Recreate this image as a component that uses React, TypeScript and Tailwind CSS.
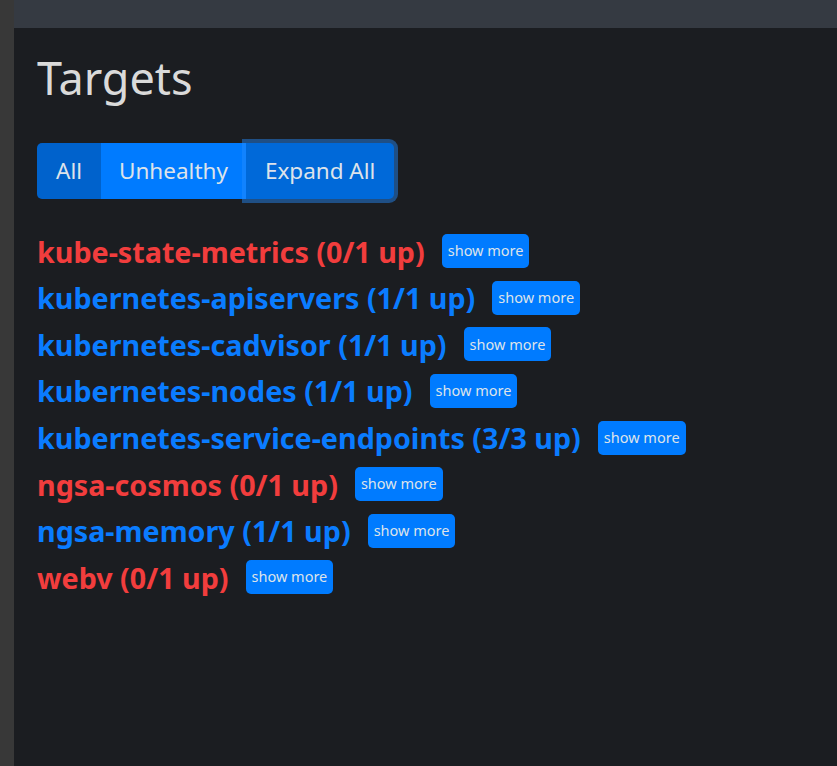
import React from "react";

const targets: { name: string; up: string; healthy: boolean }[] = [
  { name: "kube-state-metrics", up: "0/1 up", healthy: false },
  { name: "kubernetes-apiservers", up: "1/1 up", healthy: true },
  { name: "kubernetes-cadvisor", up: "1/1 up", healthy: true },
  { name: "kubernetes-nodes", up: "1/1 up", healthy: true },
  { name: "kubernetes-service-endpoints", up: "3/3 up", healthy: true },
  { name: "ngsa-cosmos", up: "0/1 up", healthy: false },
  { name: "ngsa-memory", up: "1/1 up", healthy: true },
  { name: "webv", up: "0/1 up", healthy: false },
];

export default function App() {
  return (
    <div
      className="flex h-[766px] w-[837px] overflow-hidden bg-[#1b1d21]"
      style={{ fontFamily: '"Noto Sans", "Open Sans", sans-serif' }}
    >
      <div className="w-[14px] shrink-0 bg-[#383838]" />
      <div className="flex flex-1 flex-col">
        <div className="h-[28px] shrink-0 bg-[#353a42]" />
        <div className="flex flex-col pl-[23px]">
          <h1 className="mt-[19px] text-[45px] font-normal leading-[62px] text-[#dadada]">
            Targets
          </h1>
          <div className="mt-[34px] flex">
            <div className="flex h-[56px] rounded-[5px]">
              <button className="rounded-l-[5px] bg-[#0062cc] px-[19px] text-[22.5px] text-[#dde3ea]">
                All
              </button>
              <button className="bg-[#007bff] px-[18px] text-[22.5px] text-[#dde3ea]">
                Unhealthy
              </button>
              <button className="rounded-r-[5px] bg-[#0069d9] px-[19px] text-[22.5px] text-[#dde3ea] shadow-[0_0_0_4px_rgba(38,143,255,0.45)]">
                Expand All
              </button>
            </div>
          </div>
          <div className="mt-[29px] flex flex-col">
            {targets.map((t) => (
              <div key={t.name} className="flex h-[46.57px] items-center gap-[17px]">
                <span
                  className={`text-[28.7px] font-bold ${
                    t.healthy ? "text-[#0a7cff]" : "text-[#f23d3d]"
                  }`}
                >
                  {t.name} ({t.up})
                </span>
                <button className="h-[34px] rounded-[5px] bg-[#007bff] px-[6px] text-[14.5px] text-[#dde3ea]">
                  show more
                </button>
              </div>
            ))}
          </div>
        </div>
      </div>
    </div>
  );
}
